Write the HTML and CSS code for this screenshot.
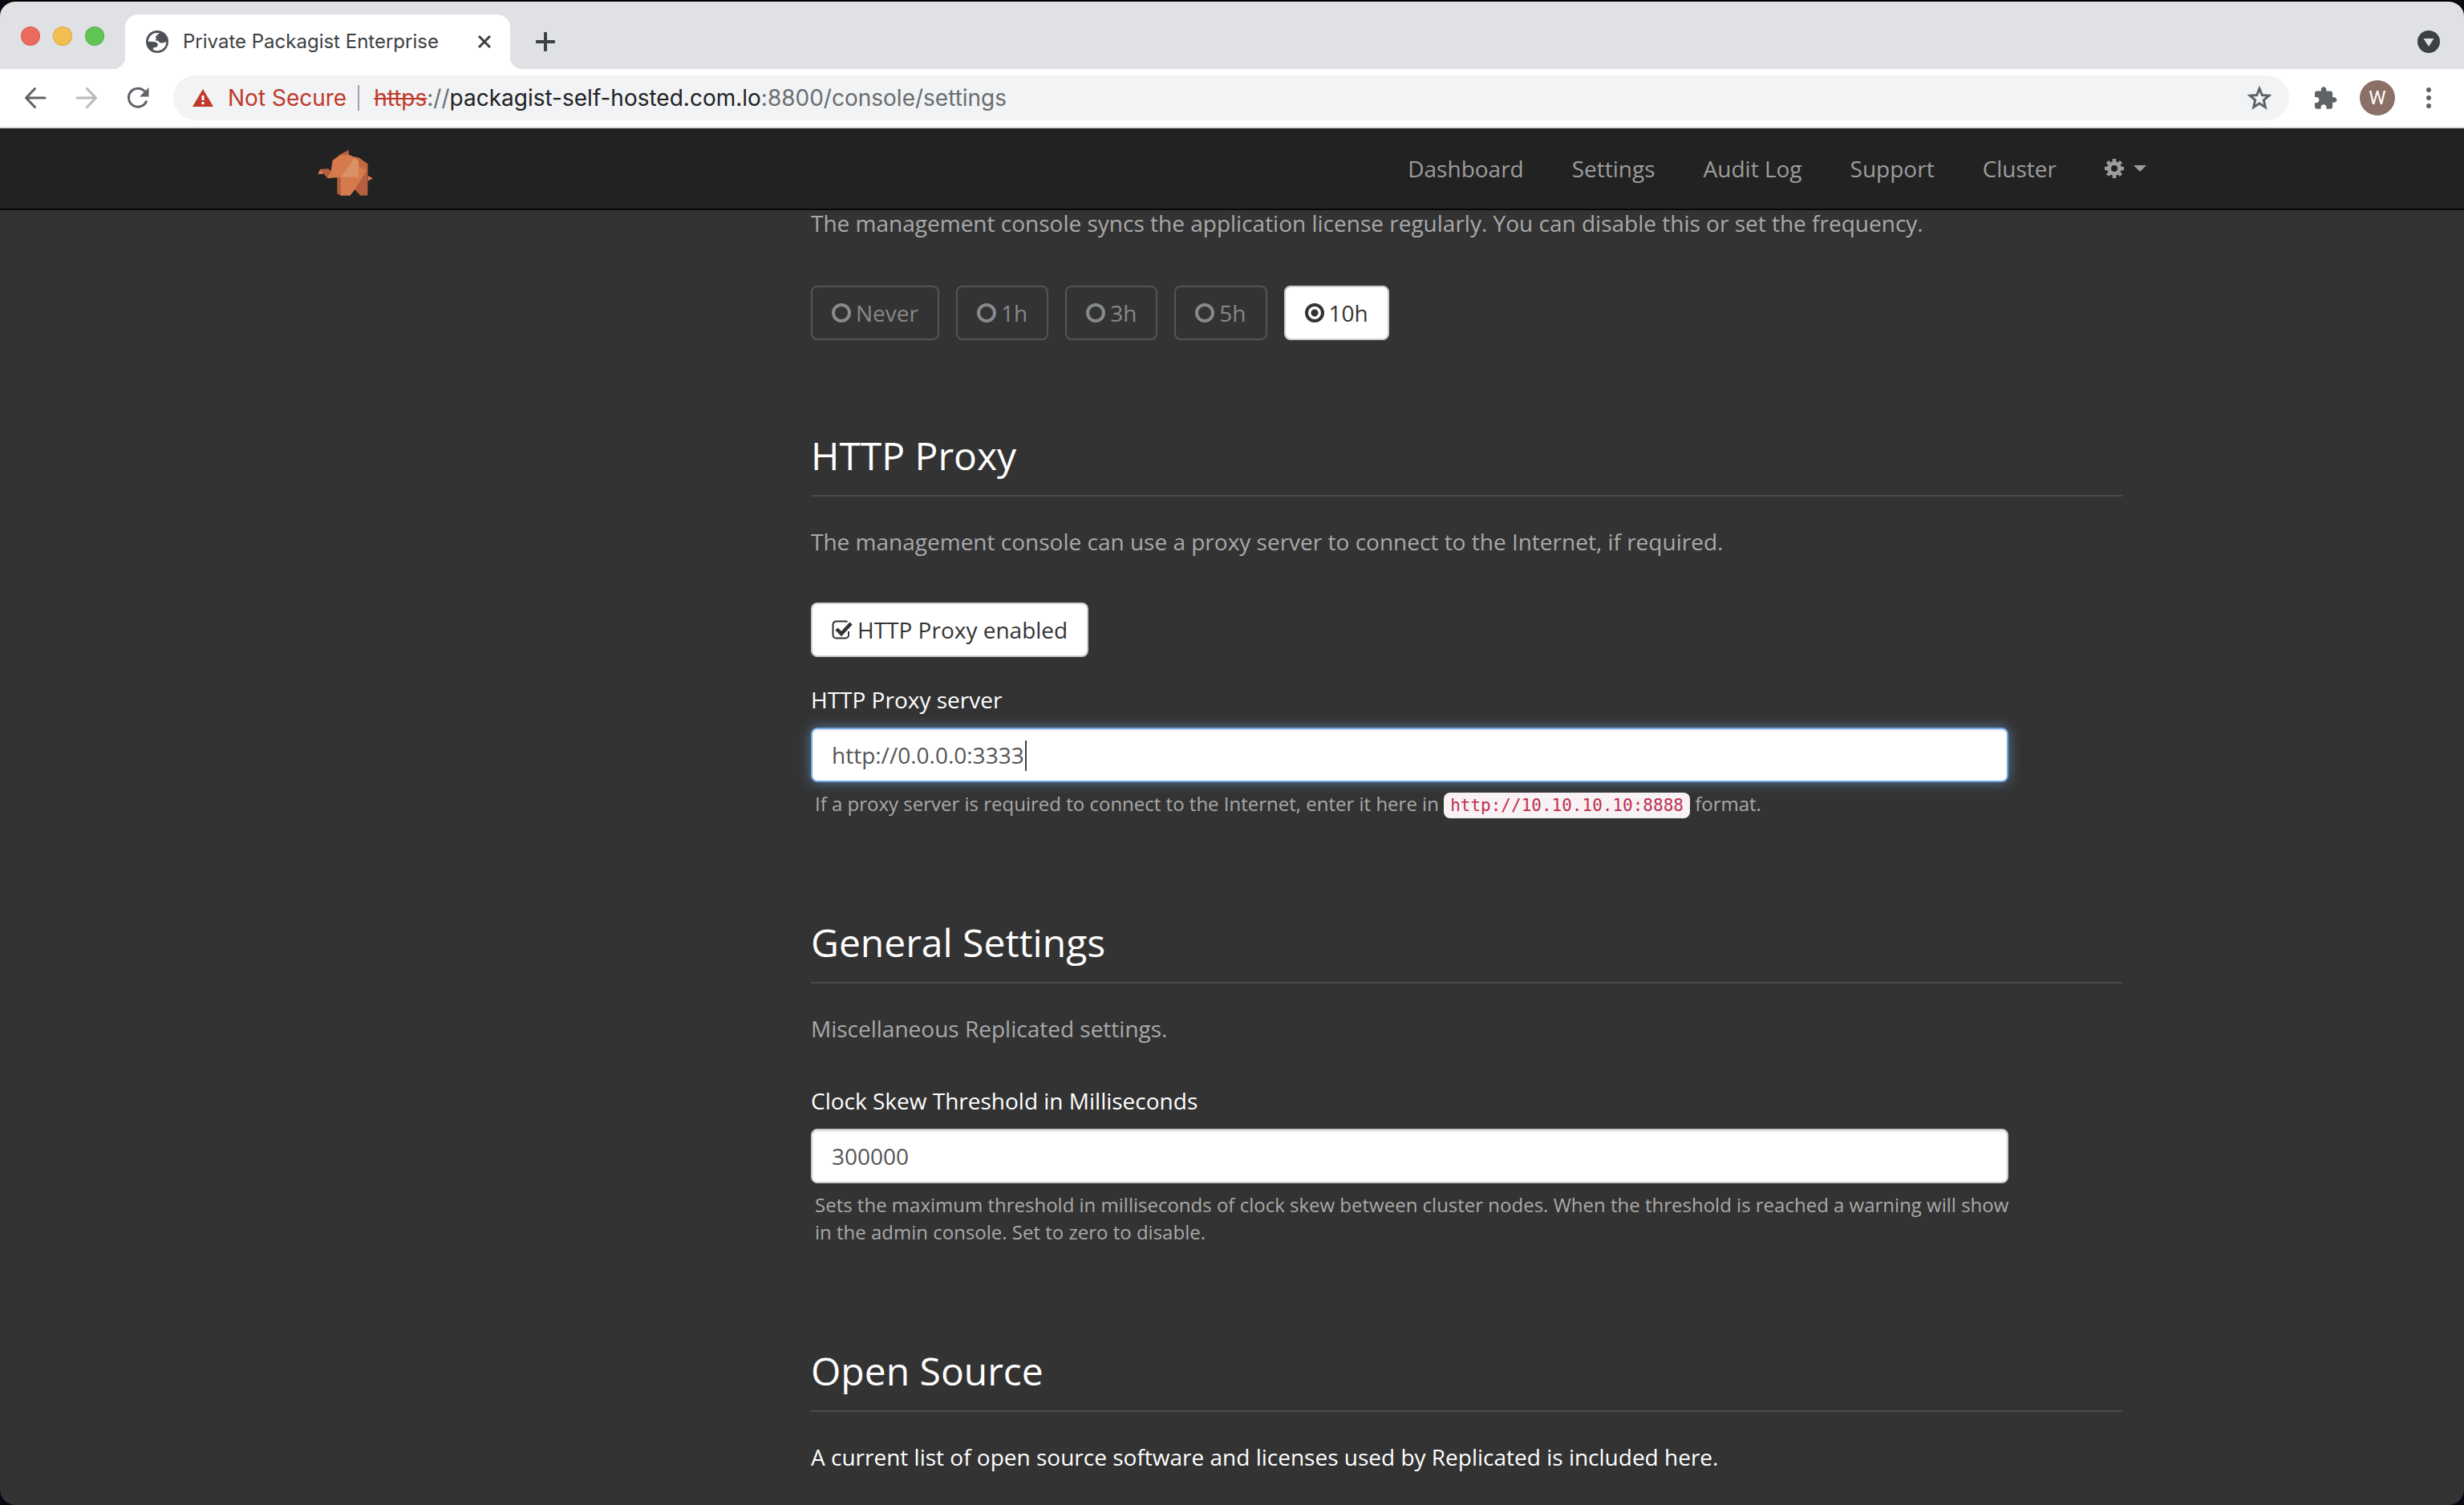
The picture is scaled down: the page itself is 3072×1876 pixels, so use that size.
FILE: index.html
```html
<!DOCTYPE html>
<html lang="en">
<head>
<meta charset="utf-8">
<title>Private Packagist Enterprise</title>
<link rel="stylesheet" href="styles.css">
</head>
<body>
<div class="window">
  <div class="tabstrip">
    <div class="lights"><span class="light light-close"></span><span class="light light-min"></span><span class="light light-max"></span></div>
    <div class="tab">
      <svg class="icon28" viewBox="96 24 84 84"><circle cx="138" cy="66" r="42" fill="#4d5156"/><path fill="#fff" d="M104 66Q106 42 128 34L147 33 134 44Q129 50 137 54L131 58Q130 62 137 62 145 62 146 68 152 73 164 69L172 66Q172 94 142 100 132 101 122 96L124 88 136 86Q145 76 136 70 128 64 104 66z"/></svg>
      <span class="tab-title">Private Packagist Enterprise</span>
      <button class="bare" aria-label="Close tab"><svg class="icon16" viewBox="0 0 16 16"><path d="M1 1l14 14M15 1L1 15" stroke="#3c4043" stroke-width="3"/></svg></button>
    </div>
    <button class="bare new-tab" aria-label="New tab"><svg class="icon24" viewBox="0 0 24 24"><path d="M12 1.500v21M1.500 12h21" stroke="#3c4043" stroke-width="4" stroke-linecap="round"/></svg></button>
    <button class="bare tab-search" aria-label="Search tabs"><svg class="icon28" viewBox="0 0 28 28"><circle cx="14" cy="14" r="14" fill="#3c4043"/><path d="M7.500 10h13L14 20z" fill="#dfe1e5"/></svg></button>
  </div>
  <div class="toolbar">
    <button class="bare" aria-label="Back"><svg class="icon28" viewBox="0 0 28 28" fill="none" stroke="#5f6368" stroke-width="3" stroke-linecap="round" stroke-linejoin="round"><path d="M26 14H3M13.500 2.500L2.500 14l11 11.500"/></svg></button>
    <button class="bare" aria-label="Forward"><svg class="icon28" viewBox="0 0 28 28" fill="none" stroke="#bababc" stroke-width="3" stroke-linecap="round" stroke-linejoin="round"><path d="M2 14h23M14.500 2.500L25.500 14l-11 11.500"/></svg></button>
    <button class="bare" aria-label="Reload"><svg class="icon28" viewBox="0 0 28 28"><path d="M24.800 17.500A11.500 11.500 0 1 1 22.500 6" fill="none" stroke="#5f6368" stroke-width="3"/><path d="M27.500 1v11.500H16z" fill="#5f6368"/></svg></button>
    <div class="omnibox">
      <svg class="warn" viewBox="0 0 26 22"><path d="M13 0l13 22H0z" fill="#c0392b"/><path d="M13 8v6M13 16v3" stroke="#fff" stroke-width="3"/></svg>
      <span class="not-secure">Not Secure</span>
      <span class="url"><s>https</s>://<b>packagist-self-hosted.com.lo</b>:8800/console/settings</span>
      <button class="bare" aria-label="Bookmark"><svg class="icon30" viewBox="0 0 30 30"><path d="M15 3.500l3.300 8 8.600.7-6.600 5.700 2 8.600-7.300-4.500-7.300 4.500 2-8.600-6.600-5.700 8.600-.7z" fill="none" stroke="#5f6368" stroke-width="3"/></svg></button>
    </div>
    <button class="bare" aria-label="Extensions"><svg class="icon30" viewBox="1 0 22 23"><path fill="#5f6368" d="M20.500 11H19V7c0-1.100-.9-2-2-2h-4V3.500C13 2.120 11.880 1 10.500 1S8 2.120 8 3.500V5H4c-1.100 0-1.990.9-1.990 2v3.800H3.500c1.490 0 2.700 1.210 2.700 2.700s-1.210 2.700-2.700 2.700H2V20c0 1.100.9 2 2 2h3.800v-1.500c0-1.490 1.210-2.700 2.700-2.700s2.700 1.210 2.700 2.700V22H17c1.100 0 2-.9 2-2v-4h1.500c1.380 0 2.500-1.120 2.500-2.500S21.880 11 20.500 11z"/></svg></button>
    <button class="avatar">W</button>
    <button class="bare" aria-label="Menu"><svg class="icon28" viewBox="0 0 28 28" fill="#5f6368"><circle cx="14" cy="4" r="3"/><circle cx="14" cy="14" r="3"/><circle cx="14" cy="24" r="3"/></svg></button>
  </div>
  <header class="navbar">
    <div class="container navbar-inner">
      <a class="brand" href="#" aria-label="Home"><svg class="logo" viewBox="51 80 210 171">
        <path fill="#b55f3e" d="M132 98L167 80 168 98 182 104 204 108 239 132 238 250 211 250 190 228 172 250 138 250 124 243 124 170 140 150z"/>
        <path fill="#b55f3e" d="M60 152L90 150 101 158 92 182 88 186 73 168 62 166z"/>
        <path fill="#d47a4c" d="M107 119L132 100 166 97 190 108 235 157 190 228 172 250 138 250 138 181 88 186 101 158z"/>
        <path fill="#d47a4c" d="M52 171L60 153 73 165 72 169z"/>
        <path fill="#db9164" d="M138 181L190 108 204 120 204 181z"/>
        <path fill="#c3693f" d="M190 108L204 108 236 132 236 157 204 140 204 120z"/>
        <path fill="#d47a4c" d="M239 176L258 186 239 196z"/>
      </svg></a>
      <nav class="nav">
        <a href="#">Dashboard</a><a href="#">Settings</a><a href="#">Audit Log</a><a href="#">Support</a><a href="#">Cluster</a>
        <button class="bare gear" aria-label="Account menu"><svg class="icon24" viewBox="0 0 24 24"><circle cx="12" cy="12" r="6.500" fill="none" stroke="#9d9d9d" stroke-width="5"/><path d="M12 0v5M12 19v5M0 12h5M19 12h5M3.500 3.500L7 7M17 17l3.500 3.500M20.500 3.500L17 7M7 17l-3.500 3.500" stroke="#9d9d9d" stroke-width="4.500"/></svg><span class="arrow"></span></button>
      </nav>
    </div>
  </header>
  <main class="container">
    <div class="content">
      <section class="sync">
        <p class="lead">The management console syncs the application license regularly. You can disable this or set the frequency.</p>
        <div class="choices">
          <label class="choice"><input type="radio" name="sync">Never</label>
          <label class="choice"><input type="radio" name="sync">1h</label>
          <label class="choice"><input type="radio" name="sync">3h</label>
          <label class="choice"><input type="radio" name="sync">5h</label>
          <label class="choice active"><input type="radio" name="sync" checked>10h</label>
        </div>
      </section>
      <section>
        <h2>HTTP Proxy</h2>
        <p class="lead">The management console can use a proxy server to connect to the Internet, if required.</p>
        <div class="choices">
          <label class="choice active"><input class="sr-only" type="checkbox" checked><svg class="check" viewBox="0 0 26 24"><path d="M21 14v4.500a4 4 0 0 1-4 4H5.500a4 4 0 0 1-4-4v-13a4 4 0 0 1 4-4H17q1.500 0 2.500.5" fill="none" stroke="#333" stroke-width="2"/><path d="M6 11l6 6L24 4" fill="none" stroke="#333" stroke-width="4.500"/></svg>HTTP Proxy enabled</label>
        </div>
        <div class="field">
          <label for="proxy">HTTP Proxy server</label>
          <div class="input-wrap"><input class="text focused" id="proxy" type="text" value="http://0.0.0.0:3333"><span class="caret"></span></div>
          <p class="help">If a proxy server is required to connect to the Internet, enter it here in <code>http://10.10.10.10:8888</code> format.</p>
        </div>
      </section>
      <section>
        <h2>General Settings</h2>
        <p class="lead">Miscellaneous Replicated settings.</p>
        <div class="field">
          <label for="skew">Clock Skew Threshold in Milliseconds</label>
          <div class="input-wrap"><input class="text" id="skew" type="text" value="300000"></div>
          <p class="help">Sets the maximum threshold in milliseconds of clock skew between cluster nodes. When the threshold is reached a warning will show in the admin console. Set to zero to disable.</p>
        </div>
      </section>
      <section>
        <h2>Open Source</h2>
        <p class="lead"><a href="#">A current list of open source software and licenses used by Replicated is included here.</a></p>
      </section>
    </div>
  </main>
</div>
</body>
</html>
```
FILE: styles.css
```css
* { box-sizing: border-box; }
body { margin: 0; background: #0a0a14; font: 28px/40px "Open Sans", "Noto Sans", sans-serif; color: #a9a9a9; }
h2, p { margin: 0; font-weight: 400; }
a { color: inherit; text-decoration: none; }
svg { display: block; flex: none; }
.bare { padding: 0; border: 0; background: none; display: flex; align-items: center; flex: none; }
.icon16 { width: 16px; height: 16px; }
.icon24 { width: 24px; height: 24px; }
.icon28 { width: 28px; height: 28px; }
.icon30 { width: 30px; height: 30px; }
.sr-only { position: absolute; opacity: 0; }

.window { min-height: 100vh; border-top: 2px solid #000; border-radius: 20px; overflow: hidden; background: #333; }

.tabstrip { display: flex; height: 84px; background: #dfe1e5; align-items: center; padding: 16px 30px 0 26px; font-family: Inter, sans-serif; }
.lights { display: flex; gap: 16px; width: 130px; padding-bottom: 14px; }
.light { width: 24px; height: 24px; border-radius: 50%; border: 1px solid rgba(0, 0, 0, .12); }
.light-close { background: #ed6a5e; }
.light-min { background: #f5bf4f; }
.light-max { background: #61c554; }
.tab { position: relative; display: flex; align-items: center; width: 480px; height: 68px; padding: 0 24px 0 26px; gap: 18px; background: #fff; border-radius: 16px 16px 0 0; }
.tab::before, .tab::after { content: ""; position: absolute; bottom: 0; width: 16px; height: 16px; }
.tab::before { left: -16px; background: radial-gradient(circle at 0 0, transparent 16px, #fff 17px); }
.tab::after { right: -16px; background: radial-gradient(circle at 100% 0, transparent 16px, #fff 17px); }
.tab-title { flex: 1; font-size: 24px; line-height: 32px; color: #3c4043; white-space: nowrap; }
.new-tab { margin-left: 32px; }
.tab-search { margin-left: auto; }

.toolbar { display: flex; align-items: center; height: 74px; padding: 0 30px; gap: 36px; background: #fff; border-bottom: 2px solid #dadcdb; font-family: Inter, sans-serif; }
.omnibox { flex: 1; display: flex; align-items: center; height: 56px; margin: 0 -6px; padding: 0 22px 0 24px; border-radius: 28px; background: #f1f3f4; white-space: nowrap; }
.warn { width: 26px; height: 22px; }
.not-secure { margin-left: 18px; padding-right: 14px; border-right: 2px solid #a0a3a7; line-height: 32px; color: #c0392b; }
.url { flex: 1; margin-left: 18px; color: #6a6d70; }
.url s { color: #c0392b; }
.url b { font-weight: 400; color: #202124; }
.avatar { width: 44px; height: 44px; margin: 0 -8px; padding: 0; border: 0; border-radius: 50%; background: #8a7066; color: #fff; font: 24px/44px Roboto, sans-serif; }

.container { width: 100%; max-width: 2340px; margin: 0 auto; padding: 0 30px; }
.navbar { background: #222; border-bottom: 2px solid #080808; }
.navbar-inner { display: flex; justify-content: space-between; height: 100px; }
.logo { width: 70px; height: 57px; margin-top: 27px; }
.nav { display: flex; align-items: center; gap: 60px; color: #9d9d9d; }
.gear { gap: 12px; }
.arrow { border: 8px solid transparent; border-top-color: #9d9d9d; border-bottom: 0; }

.content { margin: 0 30px 0 615px; }
section { margin-bottom: 122px; }
section:last-child { margin-bottom: 40px; }
h2 { height: 85px; padding-top: 4px; border-bottom: 2px solid #4a4a4a; margin-bottom: 40px; font-size: 48px; line-height: 60px; color: #fff; }
.lead { line-height: 32px; }
.lead a, .field label { color: #fff; }
.choices { display: flex; gap: 21px; margin-top: 60px; }
.sync { margin-bottom: 110px; }
.sync .choices { margin-top: 62px; }
.choice { display: flex; align-items: center; gap: 6px; height: 68px; padding: 0 24px; border: 2px solid #545454; border-radius: 8px; color: #888; }
.choice.active { background: #fff; border-color: #ccc; color: #333; }
.choice input[type="radio"] { appearance: none; width: 24px; height: 24px; margin: 0; border: 4px solid #868a8d; border-radius: 50%; }
.choice input[type="radio"]:checked { border-color: #333; background: radial-gradient(circle, #333 4px, transparent 5px); }
.check { width: 26px; height: 24px; }
.field { max-width: 1493px; margin-top: 33px; }
.lead + .field { margin-top: 54px; }
.field > label { display: block; line-height: 40px; margin-bottom: 15px; }
.input-wrap { position: relative; }
.text { display: block; width: 100%; height: 68px; padding: 0 24px; border: 2px solid #ccc; border-radius: 8px; background: #fff; box-shadow: inset 0 2px 2px rgba(0, 0, 0, .075); font: inherit; color: #555; }
.text.focused { border-color: #72a7e2; box-shadow: inset 0 2px 2px rgba(0, 0, 0, .075), 0 0 16px rgba(114, 167, 226, .6); }
.caret { position: absolute; left: 267px; top: 16px; width: 2px; height: 38px; background: #444; }
.help { margin: 10px -20px 0 0; padding-left: 5px; font-size: 24px; line-height: 34px; }
code { padding: 4px 8px; border-radius: 8px; background: #f9f2f4; color: #bd2f52; font: 21px/26px "DejaVu Sans Mono", monospace; }
```
